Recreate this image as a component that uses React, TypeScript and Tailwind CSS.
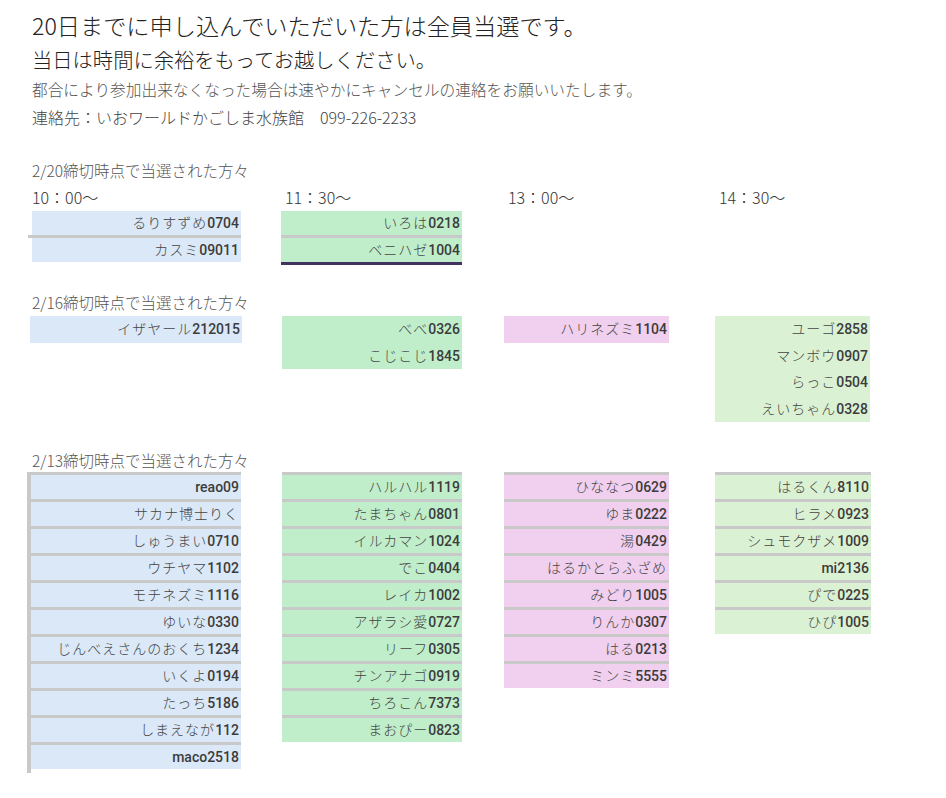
const jp = "font-['Noto_Sans_CJK_JP',sans-serif]";
const row = "font-['Roboto','Noto_Sans_CJK_JP',sans-serif] text-[14px] text-[#3a3a3a] text-right pr-[2px]";

const s2 = {
  c1: ["イザヤール212015"],
  c2: ["べべ0326", "こじこじ1845"],
  c3: ["ハリネズミ1104"],
  c4: ["ユーゴ2858", "マンボウ0907", "らっこ0504", "えいちゃん0328"],
};

const s3 = {
  c1: [
    "reao09",
    "サカナ博士りく",
    "しゅうまい0710",
    "ウチヤマ1102",
    "モチネズミ1116",
    "ゆいな0330",
    "じんべえさんのおくち1234",
    "いくよ0194",
    "たっち5186",
    "しまえなが112",
    "maco2518",
  ],
  c2: [
    "ハルハル1119",
    "たまちゃん0801",
    "イルカマン1024",
    "でこ0404",
    "レイカ1002",
    "アザラシ愛0727",
    "リーフ0305",
    "チンアナゴ0919",
    "ちろこん7373",
    "まおぴー0823",
  ],
  c3: [
    "ひななつ0629",
    "ゆま0222",
    "湯0429",
    "はるかとらふざめ",
    "みどり1005",
    "りんか0307",
    "はる0213",
    "ミンミ5555",
  ],
  c4: ["はるくん8110", "ヒラメ0923", "シュモクザメ1009", "mi2136", "ぴで0225", "ひぴ1005"],
};

// latin part of a name is set heavier than the kana
function Name({ text }: { text: string }) {
  const parts = text.split(/([\x20-\x7e]+)/).filter(Boolean);
  return (
    <>
      {parts.map((p, i) =>
        /^[\x20-\x7e]+$/.test(p) ? (
          <span key={i} className="font-medium text-[#3c3c3c]">{p}</span>
        ) : (
          <span key={i} className="font-light tracking-[1px] text-[#444]">{p}</span>
        )
      )}
    </>
  );
}

function Title({ children }: { children: string }) {
  return (
    <div className={`${jp} pl-[32px] text-[15.5px] leading-[22px] font-light text-[#555]`}>{children}</div>
  );
}

// 2/13 rows: grey top rule on every row
function RuledRows({ names, bg }: { names: string[]; bg: string }) {
  return (
    <>
      {names.map((n) => (
        <div key={n} className={`${row} ${bg} h-[27px] border-t-[3px] border-[#c9c9c9] leading-[24px]`}>
          <Name text={n} />
        </div>
      ))}
    </>
  );
}

function PlainRows({ names, bg }: { names: string[]; bg: string }) {
  return (
    <div className={bg}>
      {names.map((n) => (
        <div key={n} className={`${row} h-[26.5px] leading-[26.5px]`}>
          <Name text={n} />
        </div>
      ))}
    </div>
  );
}

export default function App() {
  return (
    <div className="min-h-[798px] bg-white pt-[8px] pb-[20px]">
      {/* notice */}
      <div className={`${jp} pl-[32px] font-light`}>
        <p className="text-[23.2px] leading-[34px] text-[#222]">
          20日までに申し込んでいただいた方は全員当選です。
        </p>
        <p className="mt-[2px] text-[20.3px] leading-[30px] text-[#222]">
          当日は時間に余裕をもってお越しください。
        </p>
        <p className="mt-[4px] text-[15.7px] leading-[24px] text-[#555]">
          都合により参加出来なくなった場合は速やかにキャンセルの連絡をお願いいたします。
        </p>
        <p className="mt-[3px] text-[16px] leading-[24px] text-[#444]">
          連絡先：いおワールドかごしま水族館　099-226-2233
        </p>
      </div>

      {/* 2/20 */}
      <div className="mt-[30px]">
        <Title>2/20締切時点で当選された方々</Title>
        <div className={`${jp} mt-[5px] flex pl-[28px] text-[16px] leading-[22px] font-light text-[#333]`}>
          <div className="w-[213px] pl-[4px]">10：00〜</div>
          <div className="ml-[41px] w-[180px] pl-[3px]">11：30〜</div>
          <div className="ml-[42px] w-[165px] pl-[4px]">13：00〜</div>
          <div className="ml-[46px] w-[155px] pl-[4px]">14：30〜</div>
        </div>
        <div className="mt-[3px] flex items-start pl-[28px]">
          <div className="w-[213px]">
            <div className={`${row} ml-[4px] h-[24px] bg-[#dae8f7] leading-[24px]`}>
              <Name text="るりすずめ0704" />
            </div>
            <div className="h-[3px] bg-[#c9c9c9]" />
            <div className={`${row} ml-[4px] h-[24px] bg-[#dae8f7] leading-[24px]`}>
              <Name text="カスミ09011" />
            </div>
          </div>
          <div className="ml-[40px] w-[181px]">
            <div className={`${row} h-[24px] bg-[#c1eeca] leading-[24px]`}>
              <Name text="いろは0218" />
            </div>
            <div className="h-[3px] bg-[#c9c9c9]" />
            <div className={`${row} h-[24px] bg-[#c1eeca] leading-[24px]`}>
              <Name text="ベニハゼ1004" />
            </div>
            <div className="h-[3px] bg-[#413262]" />
          </div>
        </div>
      </div>

      {/* 2/16 */}
      <div className="mt-[26px]">
        <Title>2/16締切時点で当選された方々</Title>
        <div className="mt-[3px] flex items-start pl-[28px]">
          <div className="w-[214px] pl-[2px]">
            <PlainRows names={s2.c1} bg="bg-[#dae8f7]" />
          </div>
          <div className="ml-[40px] w-[180px]">
            <PlainRows names={s2.c2} bg="bg-[#c1eeca]" />
          </div>
          <div className="ml-[42px] w-[165px]">
            <PlainRows names={s2.c3} bg="bg-[#f0d0ee]" />
          </div>
          <div className="ml-[46px] w-[155px]">
            <PlainRows names={s2.c4} bg="bg-[#dbf1d3]" />
          </div>
        </div>
      </div>

      {/* 2/13 */}
      <div className="mt-[27px]">
        <Title>2/13締切時点で当選された方々</Title>
        <div className="mt-px flex items-start pl-[27px]">
          <div className="w-[214px] border-l-4 border-[#c9c9c9] pb-[4px]">
            <RuledRows names={s3.c1} bg="bg-[#dae8f7]" />
          </div>
          <div className="ml-[41px] w-[180px]">
            <RuledRows names={s3.c2} bg="bg-[#c1eeca]" />
          </div>
          <div className="ml-[42px] w-[165px]">
            <RuledRows names={s3.c3} bg="bg-[#f0d0ee]" />
          </div>
          <div className="ml-[46px] w-[156px]">
            <RuledRows names={s3.c4} bg="bg-[#dbf1d3]" />
          </div>
        </div>
      </div>
    </div>
  );
}
